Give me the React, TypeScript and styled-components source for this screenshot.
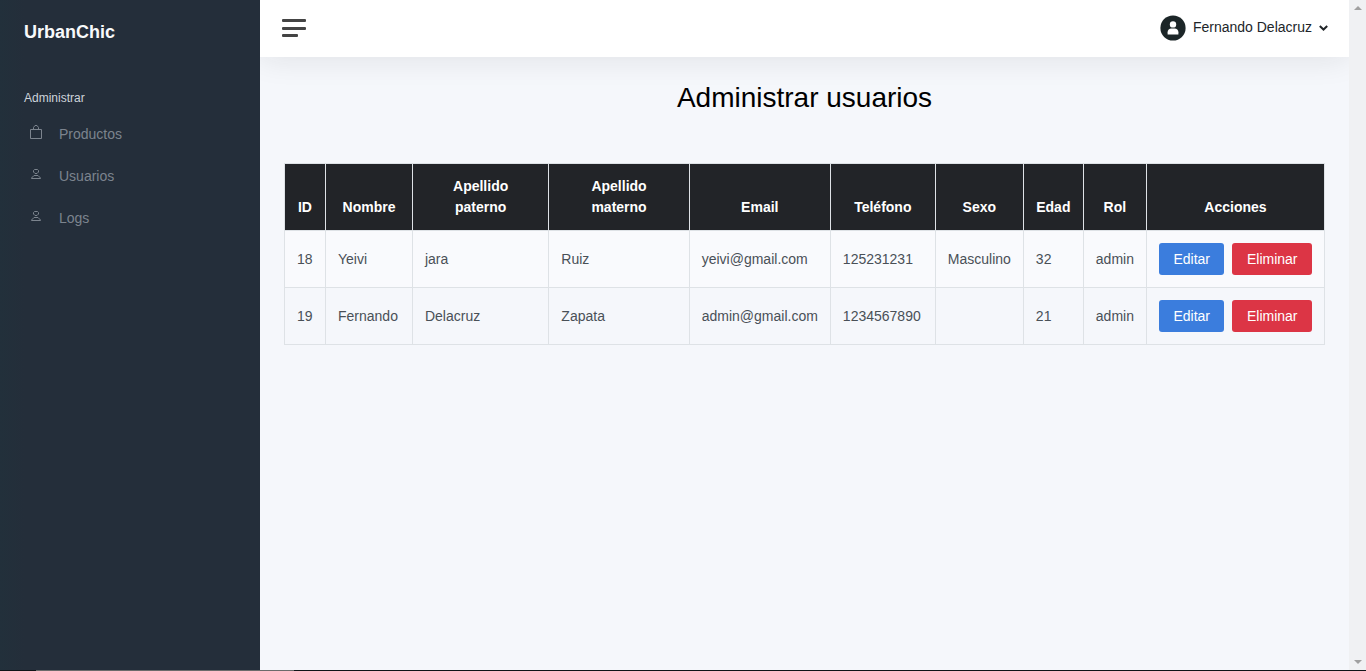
import React from "react";
import styled, { createGlobalStyle } from "styled-components";

const GlobalStyle = createGlobalStyle`
  *, *::before, *::after { box-sizing: border-box; }
  body {
    margin: 0;
    background: #f5f7fb;
    color: #495057;
    font-family: "Liberation Sans", Arial, Helvetica, sans-serif;
    font-size: 14px;
    line-height: 21px;
  }
  button { font: inherit; cursor: pointer; }
`;

const Screen = styled.div`
  display: flex;
  flex-direction: column;
  min-height: 100vh;
`;

const Wrapper = styled.div`
  display: flex;
  flex: 1;
`;

const Sidebar = styled.nav`
  z-index: 1;
  flex: 0 0 260px;
  background: linear-gradient(90deg, #22303b 0, #242e3a 24px);
`;

const Brand = styled.a`
  display: block;
  padding: 18px 24px;
  color: #f8f9fa;
  font-size: 18px;
  font-weight: 700;
  line-height: 28px;
  text-decoration: none;
`;

const NavHeading = styled.h2`
  margin: 0;
  padding: 24px 24px 5px;
  color: #ced4da;
  font-size: 12px;
  font-weight: 400;
  line-height: 20px;
`;

const NavList = styled.ul`
  margin: 0;
  padding: 0;
  list-style: none;
`;

const NavLink = styled.a`
  display: flex;
  align-items: center;
  gap: 14px;
  height: 42px;
  padding: 0 27px;
  color: #7c848e;
  text-decoration: none;

  svg { flex: none; }
`;

const Main = styled.div`
  display: flex;
  flex: 1;
  flex-direction: column;
  min-width: 0;
`;

const Navbar = styled.header`
  display: flex;
  align-items: center;
  justify-content: space-between;
  height: 57px;
  padding: 0 21px 2px 22px;
  background: #fff;
  box-shadow: 0 0 32px rgba(24, 26, 28, 0.11);
`;

const PlainButton = styled.button`
  display: flex;
  align-items: center;
  padding: 0;
  border: 0;
  background: none;
  color: #212529;
`;

const UserButton = styled(PlainButton)`
  gap: 7px;
`;

const Content = styled.main`
  padding: 24px;
`;

const Title = styled.h1`
  margin: 0 0 48px;
  color: #000;
  font-size: 28px;
  font-weight: 400;
  line-height: 34px;
  text-align: center;
`;

const Table = styled.table`
  width: 100%;
  border-collapse: collapse;
`;

const Th = styled.th`
  padding: 12px;
  border: 1px solid #dee2e6;
  background: #222428;
  color: #fff;
  font-weight: 700;
  text-align: center;
  vertical-align: bottom;
  white-space: pre-line;
`;

const Row = styled.tr`
  &:nth-child(odd) { background: #f9fafd; }
`;

const Td = styled.td`
  padding: 12px;
  border: 1px solid #dee2e6;
  vertical-align: middle;
`;

const Actions = styled.div`
  display: flex;
  gap: 8px;
`;

const ActionButton = styled.button<{ $tone: string }>`
  flex: 1 1 auto;
  height: 32px;
  padding: 0 14px;
  border: 0;
  border-radius: 3px;
  background: ${(p) => p.$tone};
  color: #fff;
`;

const ScrollTrack = styled.div`
  z-index: 1;
  display: flex;
  flex: 0 0 17px;
  flex-direction: column;
  align-items: center;
  justify-content: space-between;
  padding: 6px 0;
  background: #f0f1f3;
`;

const TaskbarEdge = styled.div`
  height: 1px;
  background: linear-gradient(90deg, #101418 36px, #6b6b6b 36px 294px, #101418 294px);
`;

const BagIcon = () => (
  <svg width="18" height="18" viewBox="0 0 18 18" fill="none" stroke="currentColor" aria-hidden="true">
    <path d="M3.5 4.5h11v9h-11zM6.5 4.5V2.500L8 .5h2l1.500 2v2" />
  </svg>
);

const UserIcon = () => (
  <svg width="18" height="18" viewBox="0 0 18 18" fill="none" stroke="currentColor" aria-hidden="true">
    <path d="M7.5 2.5h3l1 1V5L10 6.500H8L6.500 5V3.500zM7 8.500h4l2.500 2.500v.5h-9V11z" />
  </svg>
);

const MenuIcon = () => (
  <svg width="24" height="18" viewBox="0 0 24 18" fill="#444" aria-hidden="true">
    <rect width="24" height="3" rx="1" />
    <rect y="8" width="24" height="3" rx="1" />
    <rect y="15" width="16" height="3" rx="1" />
  </svg>
);

const AvatarIcon = () => (
  <svg width="26" height="26" viewBox="0 0 26 26" aria-hidden="true">
    <circle cx="13" cy="13" r="12.6" fill="#1c2628" />
    <circle cx="13" cy="9.4" r="3.2" fill="#fff" />
    <path d="M7.6 19.6v-2.3c0-2.3 1.6-3.7 3.8-3.7h3.2c2.2 0 3.8 1.4 3.8 3.7v2.3z" fill="#fff" />
  </svg>
);

const ChevronIcon = () => (
  <svg width="9" height="6" viewBox="0 0 9 6" fill="none" stroke="#212529" strokeWidth="2" aria-hidden="true">
    <path d="M.8 1 4.5 4.5 8.2 1" />
  </svg>
);

const Arrow = ({ down = false }: { down?: boolean }) => (
  <svg width="8" height="4" viewBox="0 0 8 4" fill="#a0a0a0" aria-hidden="true">
    <path d={down ? "M0 0h8L4 4z" : "M0 4h8L4 0z"} />
  </svg>
);

const links = [
  { label: "Productos", Icon: BagIcon },
  { label: "Usuarios", Icon: UserIcon },
  { label: "Logs", Icon: UserIcon },
];

const columns = [
  { label: "ID", width: 41 },
  { label: "Nombre", width: 87 },
  { label: "Apellido\npaterno", width: 137 },
  { label: "Apellido\nmaterno", width: 141 },
  { label: "Email", width: 140 },
  { label: "Teléfono", width: 105 },
  { label: "Sexo", width: 88 },
  { label: "Edad", width: 60 },
  { label: "Rol", width: 63 },
  { label: "Acciones", width: 178 },
];

const users = [
  ["18", "Yeivi", "jara", "Ruiz", "yeivi@gmail.com", "125231231", "Masculino", "32", "admin"],
  ["19", "Fernando", "Delacruz", "Zapata", "admin@gmail.com", "1234567890", "", "21", "admin"],
];

export default function App() {
  return (
    <Screen>
      <GlobalStyle />
      <Wrapper>
        <Sidebar>
          <Brand href="#">UrbanChic</Brand>
          <NavHeading>Administrar</NavHeading>
          <NavList>
            {links.map(({ label, Icon }) => (
              <li key={label}>
                <NavLink href="#">
                  <Icon />
                  {label}
                </NavLink>
              </li>
            ))}
          </NavList>
        </Sidebar>
        <Main>
          <Navbar>
            <PlainButton type="button" aria-label="Menú">
              <MenuIcon />
            </PlainButton>
            <UserButton type="button">
              <AvatarIcon />
              Fernando Delacruz
              <ChevronIcon />
            </UserButton>
          </Navbar>
          <Content>
            <Title>Administrar usuarios</Title>
            <Table>
              <colgroup>
                {columns.map((c) => (
                  <col key={c.label} width={c.width} />
                ))}
              </colgroup>
              <thead>
                <tr>
                  {columns.map((c) => (
                    <Th key={c.label} scope="col">{c.label}</Th>
                  ))}
                </tr>
              </thead>
              <tbody>
                {users.map((user) => (
                  <Row key={user[0]}>
                    {user.map((value, i) => (
                      <Td key={columns[i].label}>{value}</Td>
                    ))}
                    <Td>
                      <Actions>
                        <ActionButton type="button" $tone="#3b7ddd">Editar</ActionButton>
                        <ActionButton type="button" $tone="#dc3545">Eliminar</ActionButton>
                      </Actions>
                    </Td>
                  </Row>
                ))}
              </tbody>
            </Table>
          </Content>
        </Main>
        <ScrollTrack>
          <Arrow />
          <Arrow down />
        </ScrollTrack>
      </Wrapper>
      <TaskbarEdge />
    </Screen>
  );
}
